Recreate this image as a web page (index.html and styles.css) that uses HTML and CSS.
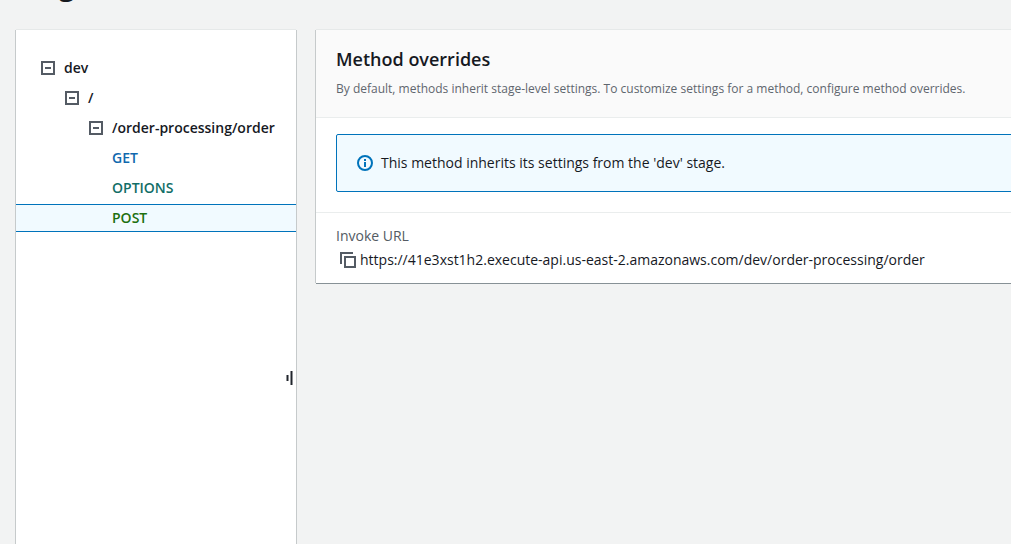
FILE: index.html
```html
<!DOCTYPE html>
<html lang="en">
<head>
<meta charset="utf-8">
<title>Stages</title>
<link rel="stylesheet" href="styles.css">
</head>
<body>
<h1 class="page-title">Stages</h1>
<main class="layout">
  <nav class="panel sidebar" aria-label="Resources">
    <ul class="tree">
      <li class="row level-1"><button class="toggle" aria-label="Collapse dev"><svg width="14" height="14" viewBox="0 0 14 14"><path d="M1 1h12v12H1zM4 7h6"/></svg></button><span>dev</span></li>
      <li class="row level-2"><button class="toggle" aria-label="Collapse /"><svg width="14" height="14" viewBox="0 0 14 14"><path d="M1 1h12v12H1zM4 7h6"/></svg></button><span>/</span></li>
      <li class="row level-3"><button class="toggle" aria-label="Collapse /order-processing/order"><svg width="14" height="14" viewBox="0 0 14 14"><path d="M1 1h12v12H1zM4 7h6"/></svg></button><span>/order-processing/order</span></li>
      <li class="row level-4"><a class="get" href="#get">GET</a></li>
      <li class="row level-4"><a class="options" href="#options">OPTIONS</a></li>
      <li class="row level-4 selected"><a class="post" href="#post">POST</a></li>
    </ul>
    <button class="resize" aria-label="Resize panel"><svg width="8" height="14" viewBox="0 0 8 14"><path d="M1.5 4h2v6h-2zM5.5 0h2v14h-2z"/></svg></button>
  </nav>
  <section class="panel details">
    <header class="details-header">
      <h2>Method overrides</h2>
      <p>By default, methods inherit stage-level settings. To customize settings for a method, configure method overrides.</p>
    </header>
    <div class="notice-area">
      <div class="notice">
        <svg width="16" height="16" viewBox="0 0 16 16"><circle cx="8" cy="8" r="7"/><path d="M8 4v2M8 7v5"/></svg>
        <span>This method inherits its settings from the 'dev' stage.</span>
      </div>
    </div>
    <div class="invoke">
      <div class="label">Invoke URL</div>
      <div class="url"><button class="copy" aria-label="Copy URL"><svg width="16" height="16" viewBox="0 0 16 16"><path d="M1 12V1h12M5 5h10v10H5z"/></svg></button><span>https://41e3xst1h2.execute-api.us-east-2.amazonaws.com/dev/order-processing/order</span></div>
    </div>
  </section>
</main>
</body>
</html>
```
FILE: styles.css
```css
* { box-sizing: border-box; }
body {
  margin: 0;
  height: 100vh;
  display: flex;
  flex-direction: column;
  overflow: hidden;
  background: #f2f3f3;
  color: #16191f;
  font: 14px/20px "Open Sans", "Noto Sans", sans-serif;
}
h1, h2, p, ul { margin: 0; padding: 0; }
button { padding: 0; border: 0; background: none; cursor: pointer; }
svg { display: block; fill: none; stroke: #545b64; stroke-width: 2; }
.page-title {
  margin: -32px 0 26px;
  padding-left: 16px;
  font-size: 27px;
  line-height: 36px;
}
.layout {
  flex: 1;
  display: grid;
  grid-template-columns: 280px 1fr;
  gap: 20px;
  align-items: start;
  margin: 0 -24px 0 16px;
}
.panel {
  background: #fff;
  box-shadow: 0 1px 0 0 #879196, -1px 0 0 0 #c6cacb, 1px 0 0 0 #c6cacb, 0 -1px 0 0 #e6e9e9;
}
.sidebar {
  position: relative;
  align-self: stretch;
}
.tree {
  display: grid;
  gap: 2px;
  padding-top: 24px;
  list-style: none;
}
.row {
  display: flex;
  align-items: center;
  gap: 9px;
  height: 28px;
  font-weight: 600;
}
.level-1 { padding-left: 25px; }
.level-2 { padding-left: 49px; }
.level-3 { padding-left: 73px; }
.level-4 { padding-left: 96px; }
.row a { text-decoration: none; }
.get { color: #0f68ae; }
.options { color: #126e67; }
.post { color: #1d7010; }
.selected {
  background: #f1faff;
  border: solid #0073bb;
  border-width: 1px 0;
}
.resize {
  position: absolute;
  top: 341px;
  right: 3px;
}
.resize svg { fill: #21252c; stroke: none; }
.details-header {
  padding: 17px 20px 18px;
  background: #fafafa;
  border-bottom: 1px solid #eaeded;
}
h2 {
  font-size: 18px;
  line-height: 24px;
  font-weight: 600;
}
.details-header p {
  margin-top: 8px;
  color: #5f666e;
  font-size: 12px;
  white-space: nowrap;
}
.notice-area { padding: 16px 20px 20px; }
.notice {
  display: flex;
  align-items: center;
  gap: 8px;
  padding: 18px 20px;
  background: #f1faff;
  border: 1px solid #0073bb;
  border-radius: 2px;
}
.notice svg { stroke: #0073bb; }
.invoke {
  padding: 13px 20px;
  border-top: 1px solid #eaeded;
}
.label { color: #545b64; }
.url {
  display: flex;
  align-items: center;
  gap: 4px;
  margin-top: 4px;
  padding-left: 4px;
}
```
